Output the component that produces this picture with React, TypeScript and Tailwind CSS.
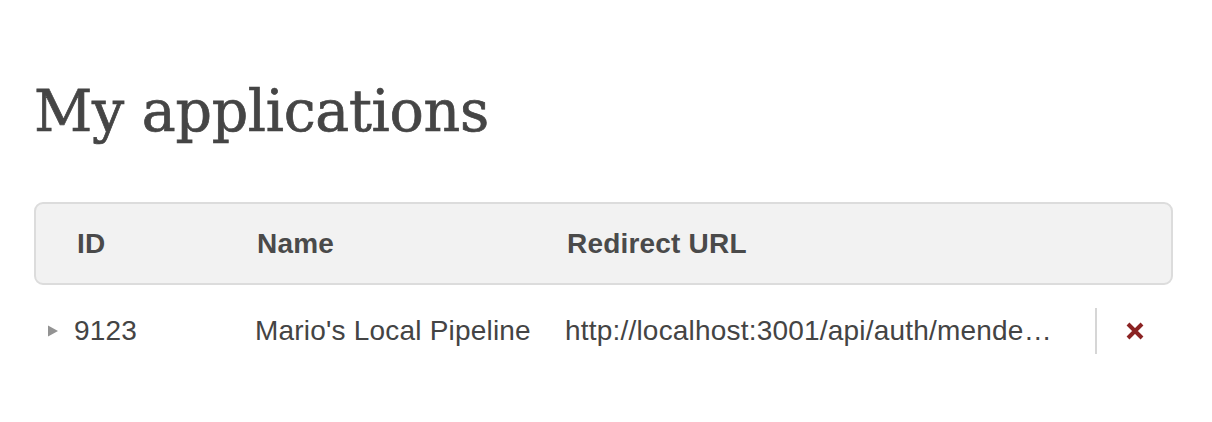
export default function App() {
  return (
    <div className="w-[1212px] h-[422px] bg-white px-[34px] pt-[76px] text-[#444]" style={{ fontFamily: '"Liberation Sans", Arial, sans-serif' }}>
      <h1 className="text-[57px] leading-[70px] text-[#454545] tracking-[-0.3px] [-webkit-text-stroke:0.7px_#454545]" style={{ fontFamily: '"DejaVu Serif", Georgia, serif' }}>
        My applications
      </h1>
      <div className="mt-[56px] w-[1139px]">
        <div className="flex items-center h-[83px] bg-[#f2f2f2] border-2 border-[#dcdcdc] rounded-[9px] text-[28px] font-bold text-[#4a4a4a] tracking-[0.2px]">
          <div className="w-[221px] pl-[41px]">ID</div>
          <div className="w-[310px]">Name</div>
          <div className="flex-1">Redirect URL</div>
        </div>
        <div className="flex items-center h-[92px] text-[28px] text-[#444] tracking-[0.2px]">
          <div className="w-[221px] flex items-center pl-[13px]">
            <svg width="12" height="14" viewBox="0 0 12 14" className="mr-[15px]">
              <path d="M1 1.5 L11 7 L1 12.5 Z" fill="#939393" />
            </svg>
            <span>9123</span>
          </div>
          <div className="w-[310px]">Mario's Local Pipeline</div>
          <div className="w-[488px] truncate">http://localhost:3001/api/auth/mendeley/callback</div>
          <div className="ml-[42px] w-[2px] h-[46px] bg-[#d6d6d6]" />
          <div className="ml-[28px] flex items-center">
            <svg width="20" height="20" viewBox="0 0 20 20">
              <path d="M3 3 L17 17 M17 3 L3 17" stroke="#8b2323" strokeWidth="4" strokeLinecap="butt" />
            </svg>
          </div>
        </div>
      </div>
    </div>
  );
}
